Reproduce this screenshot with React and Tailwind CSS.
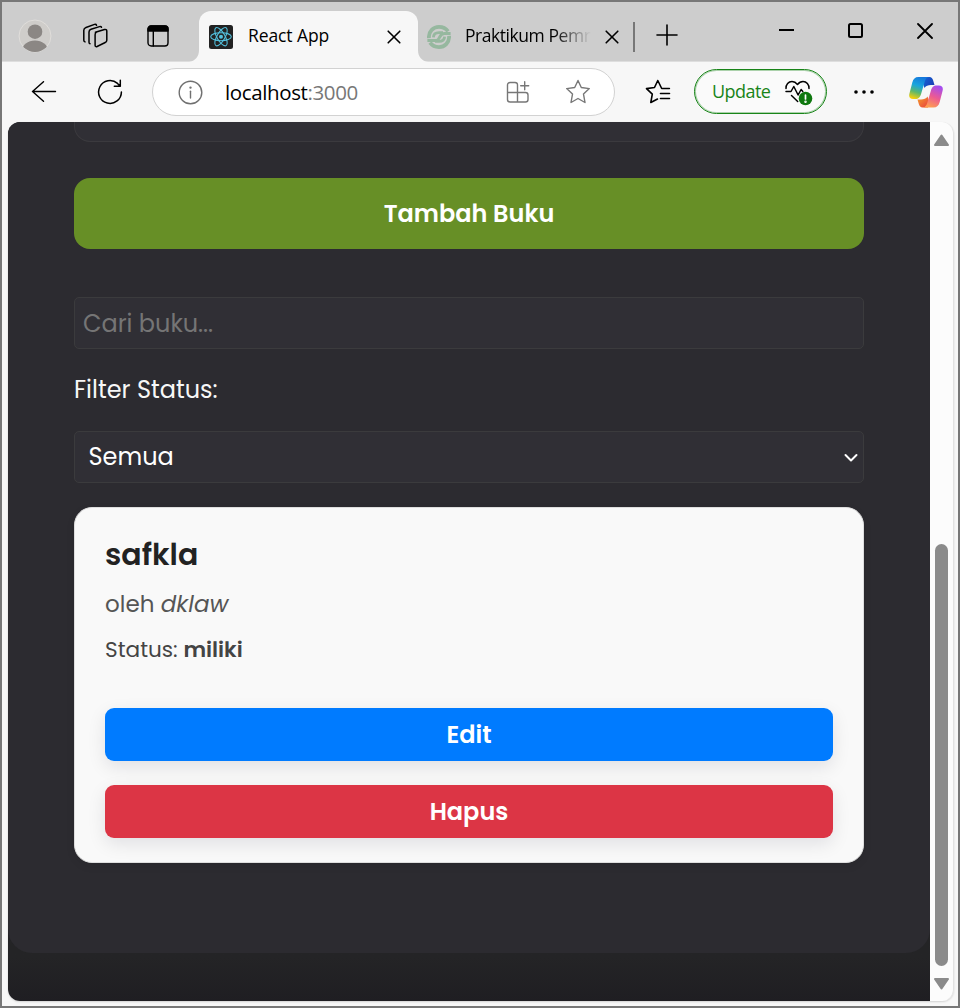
import React from 'react';

const UI = "font-['Segoe_UI','Open_Sans',sans-serif]";

function Stroke({ w, h, className, children, sw = 1.5 }) {
  return (
    <svg width={w} height={h} viewBox={`0 0 ${w} ${h}`} className={className} fill="none" stroke="currentColor" strokeWidth={sw} strokeLinecap="round" strokeLinejoin="round">
      {children}
    </svg>
  );
}

function ReactLogo() {
  return (
    <svg width="24" height="24" viewBox="0 0 24 24" className="shrink-0">
      <rect width="24" height="24" rx="2.5" fill="#222" />
      <g fill="none" stroke="#53c1de" strokeWidth="1.1">
        <ellipse cx="12" cy="11.7" rx="10.3" ry="4" />
        <ellipse cx="12" cy="11.7" rx="10.3" ry="4" transform="rotate(60 12 11.7)" />
        <ellipse cx="12" cy="11.7" rx="10.3" ry="4" transform="rotate(120 12 11.7)" />
      </g>
      <circle cx="12" cy="11.7" r="2" fill="#53c1de" />
    </svg>
  );
}

function CampusLogo() {
  return (
    <svg width="24" height="24" viewBox="0 0 24 24" className="shrink-0" fill="none" stroke="#96b89f" strokeWidth="3.8">
      <path d="M1.900 13.200C1.500 6 6.500 1.900 12 1.900c4 0 7 1.600 9 4.400" />
      <path d="M.4 15.400h9c3.500 0 2.500-6.800 8-6.800h6.200" strokeWidth="3" />
      <path d="M6.400 12.400C6.500 8.800 8.700 7.600 12 7.600h4" strokeWidth="2.800" />
      <path d="M22.100 10.800C22.500 18 17.500 22.100 12 22.100c-4 0-7-1.600-9-4.400" />
      <path d="M17.600 11.600c-.1 3.600-2.300 4.800-5.600 4.800H8" strokeWidth="2.800" />
    </svg>
  );
}

function Copilot() {
  return (
    <svg width="34" height="31" viewBox="0 0 34 31">
      <defs>
        <linearGradient id="cpA" x1="0.6" y1="0" x2="0.3" y2="1">
          <stop offset="0" stopColor="#1577dc" />
          <stop offset="0.4" stopColor="#19a5dd" />
          <stop offset="0.7" stopColor="#5cb86c" />
          <stop offset="1" stopColor="#f5cf0c" />
        </linearGradient>
        <linearGradient id="cpB" x1="0.7" y1="0" x2="0.3" y2="1">
          <stop offset="0" stopColor="#a44cf0" />
          <stop offset="0.5" stopColor="#ec5a93" />
          <stop offset="1" stopColor="#ffa24d" />
        </linearGradient>
        <linearGradient id="cpC" x1="0" y1="0" x2="1" y2="0.6">
          <stop offset="0" stopColor="#1467d8" />
          <stop offset="1" stopColor="#1b3fb5" />
        </linearGradient>
        <linearGradient id="cpD" x1="0" y1="0" x2="1" y2="1">
          <stop offset="0" stopColor="#f4a12b" />
          <stop offset="1" stopColor="#e9393f" />
        </linearGradient>
      </defs>
      <path d="M15 0h5.500c2 0 3 1.300 3.600 3.200L25.500 8H22c-3 0-5 .8-6.500 3L13.500 5Z" fill="url(#cpC)" />
      <path d="M19 30.500h-5.500c-2 0-3-1.300-3.600-3.200L8.500 22.500H12c3 0 5-.8 6.500-3L20.500 25.500Z" fill="url(#cpD)" />
      <path d="M9.500 0H20c-2.500.4-3.600 2.300-4.300 4.700L12.200 16.500C11 20.500 9.500 22 6.500 22H4.200C.8 22-.4 20 .4 16.700L3.300 5.500C4.300 1.900 6 0 9.500 0Z" fill="url(#cpA)" />
      <path d="M24.500 30.500H14c2.500-.4 3.600-2.300 4.300-4.700L21.800 14C23 10 24.500 8.500 27.500 8.500h2.300c3.400 0 4.600 2 3.800 5.300L30.700 25c-1 3.600-2.700 5.500-6.200 5.500Z" fill="url(#cpB)" />
    </svg>
  );
}

function TabStrip() {
  return (
    <div className="flex h-[60px] shrink-0 border-b border-[#dedede] bg-[#cdcdcd] text-black">
      <svg width="34" height="34" viewBox="0 0 34 34" className="mt-[17px] ml-4 shrink-0">
        <defs><clipPath id="av"><circle cx="17" cy="17" r="16" /></clipPath></defs>
        <circle cx="17" cy="17" r="16" fill="#cfcdca" stroke="#e0dedb" />
        <g clipPath="url(#av)" fill="#8b8784">
          <circle cx="17" cy="12.700" r="7.300" />
          <ellipse cx="17" cy="32" rx="13" ry="10.500" />
        </g>
      </svg>
      <Stroke w={26} h={26} className="mt-[21px] ml-[30px] shrink-0">
        <path d="M13.400 9.200 22.500 6.500c1.300-.4 2.300.3 2.300 1.600v9.100c0 1.100-.5 1.900-1.600 2.300l-8.100 4c-1.200.5-2-.1-2-1.300V11.800c0-1.300.2-2.200 1.300-2.600Z" />
        <path d="M19.500 4.300c-.3-.8-1-1-2-.7L9 6.300C7.700 6.700 7 7.600 7 8.900v10.300c0 .9.300 1.400 1 1.500" />
        <path d="M14.500 2.200c-.3-.9-1-1.100-2-.8L4 4.500C2.500 5.100 1.800 6 1.800 7.300v10c0 .9.500 1.400 1.200 1.600" />
      </Stroke>
      <Stroke w={22} h={22} className="mt-[23px] ml-[39px] shrink-0" sw={1.4}>
        <rect x="1" y="1" width="20" height="20" rx="3.200" />
        <path d="M1 6V4a3 3 0 0 1 3-3h14a3 3 0 0 1 3 3v2Z" fill="currentColor" />
        <path d="M6.300 6v15" />
      </Stroke>
      <svg width="10" height="12" viewBox="0 0 10 12" className="mt-[48px] ml-[20px] shrink-0 fill-[#f7f7f7]"><path d="M10 0v12H0C6 11 10 7 10 0Z" /></svg>
      <div className="mt-[9px] flex h-[51px] w-[219px] shrink-0 items-center rounded-t-[12px] bg-[#f7f7f7] pl-[10px]">
        <ReactLogo />
        <span className="ml-[15px] w-[139px] pb-[2px] text-[17.5px] tracking-[-0.1px]">React App</span>
        <Stroke w={14} h={14} sw={1.6}><path d="m1.200 1.200 11.600 11.600M12.800 1.200 1.200 12.800" /></Stroke>
      </div>
      <svg width="10" height="12" viewBox="0 0 10 12" className="mt-[48px] shrink-0 fill-[#f7f7f7]"><path d="M0 0v12h10C4 11 0 7 0 0Z" /></svg>
      <div className="-ml-px flex h-[51px] w-[194px] mt-[9px] shrink-0 items-center">
        <CampusLogo />
        <span className="ml-[14px] w-[126px] bg-gradient-to-r from-black from-70% to-transparent bg-clip-text pb-[2px] text-[17.500px] tracking-[-0.45px] whitespace-nowrap text-transparent">Praktikum Pemr</span>
        <Stroke w={14} h={14} className="ml-[14px] shrink-0" sw={1.6}><path d="m1.200 1.200 11.600 11.600M12.800 1.200 1.200 12.800" /></Stroke>
      </div>
      <div className="mt-[20px] ml-[12px] h-[30px] w-[1.5px] shrink-0 bg-[#777]" />
      <Stroke w={22} h={22} className="mt-[22px] ml-[21px] shrink-0" sw={1.6}><path d="M11 1v20M1 11h20" /></Stroke>
      <div className="mr-[25px] ml-auto flex shrink-0 pt-[21px]">
        <div className="mt-[6px] mr-[54px] h-[2px] w-[15px] bg-black" />
        <div className="mr-[54px] h-[15px] w-[15px] rounded-[2.5px] border-2 border-black" />
        <Stroke w={16} h={16} sw={1.8}><path d="m1 1 14 14M15 1 1 15" /></Stroke>
      </div>
    </div>
  );
}

function Toolbar() {
  return (
    <div className="flex h-[60px] shrink-0 items-center bg-[#f7f7f7] text-black">
      <Stroke w={26} h={22} className="ml-[29px] shrink-0" sw={1.4}><path d="M24.500 10.500H1.500M12.500 .7 1.500 10.500l11 9.800" /></Stroke>
      <Stroke w={26} h={26} className="ml-[40px] shrink-0" sw={1.5}><path d="M24.400 13A11.400 11.400 0 1 1 20.500 4.400L23.300 7.300M23.300 1.300v6h-6" /></Stroke>
      <div className="ml-[29px] flex h-[48px] w-[463px] shrink-0 items-center rounded-full border-[1.5px] border-[#d2d2d2] bg-white pl-[25px]">
        <Stroke w={25} h={25} className="shrink-0 text-[#707070]" sw={1.4}>
          <circle cx="12.500" cy="12.500" r="11.300" />
          <path d="M12.500 11.300v6.700" />
          <circle cx="12.500" cy="7.600" r=".5" fill="currentColor" />
        </Stroke>
        <span className="ml-[22px] w-[281px] text-[20.5px] tracking-[-0.38px]">localhost<span className="text-[#777]">:3000</span></span>
        <Stroke w={24} h={24} className="shrink-0 text-[#777]" sw={1.4}>
          <path d="M11.500 22V5c0-1.600-.8-2.500-2.500-2.500H4C2.500 2.500 1.500 3.500 1.500 5v14.500C1.500 21 2.500 22 4 22h15.500c1.500 0 2.500-1 2.500-2.500V15c0-1.600-1-2.500-2.500-2.500h-18M18.700 1.800v8M14.700 5.800h8" />
        </Stroke>
        <Stroke w={26} h={26} className="ml-[35px] shrink-0 text-[#777]" sw={1.4}>
          <path d="m13 1.500 3.300 7 8 1.100-5.800 5.500 1.500 8.400-7-4-7 4 1.500-8.400L1.700 9.600l8-1.100Z" />
        </Stroke>
      </div>
      <Stroke w={26} h={26} className="ml-[30px] shrink-0" sw={1.6}>
        <path d="M24.400 9.500h-7.700l-3.900-8-3.300 7-8 1.100 5.800 5.500-1.500 8.400 6.700-3.500M15.500 14.500h9M15.500 19.500h9" />
      </Stroke>
      <div className="mb-px ml-[23px] flex h-[45px] w-[133px] shrink-0 items-center rounded-full border border-[#188418] bg-[#fafafa] pl-[17px] inset-ring inset-ring-[#188418]/35">
        <span className="w-[73px] text-[18px] tracking-[-0.55px] text-[#188418]">Update</span>
        <svg width="28" height="26" viewBox="0 0 28 26" className="mt-[2px]" fill="none" stroke="#000" strokeWidth="1.500" strokeLinecap="round" strokeLinejoin="round">
          <path d="M1 8.500C.8 4.500 3.500 1.500 7 1.500c2.300 0 4 1.100 5.500 3 1.500-1.900 3.200-3 5.500-3 3.500 0 6.200 3 6 7M1 11.500h5l2.800-5 4.300 8.500 3-5.500 1.700 2M6.500 15.500l6.200 6" />
          <circle cx="20.500" cy="18.500" r="6.800" fill="#0f780f" stroke="none" />
          <path d="M20.500 15v4" stroke="#fff" strokeWidth="1.700" /><circle cx="20.500" cy="21.800" r=".5" stroke="#fff" />
        </svg>
      </div>
      <svg width="20" height="4" viewBox="0 0 20 4" className="ml-[27px] shrink-0"><circle cx="2" cy="2" r="1.800" /><circle cx="10" cy="2" r="1.800" /><circle cx="18" cy="2" r="1.800" /></svg>
      <div className="ml-[35px] shrink-0"><Copilot /></div>
    </div>
  );
}

function BookPage() {
  return (
    <div className="flex w-[922px] shrink-0 flex-col overflow-hidden rounded-l-[12px] bg-gradient-to-b from-[#242426] from-95% to-[#1f1e22] font-['Poppins','Inter',sans-serif]">
      <div className="flex h-[831px] shrink-0 flex-col rounded-b-[24px] bg-[#2c2b30] px-[66px]">
        <div className="h-[20px] shrink-0 rounded-b-[16px] border border-t-0 border-[#3b3a3e] bg-[#302f35]" />
        <button className="mt-[36px] h-[71px] shrink-0 rounded-[16px] bg-[#678f26] pt-px text-[24px] font-semibold text-white">Tambah Buku</button>
        <div className="mt-[48px] flex h-[52px] shrink-0 items-center rounded-[5px] border border-[#3b3b3d] bg-[#302f35] pt-[2px] pl-[8px] text-[24px] tracking-[-0.03px] text-[#757575]">Cari buku...</div>
        <div className="mt-[23px] flex h-[36px] shrink-0 items-center text-[24px] text-[#f7f7f7]">Filter Status:</div>
        <div className="mt-[23px] flex h-[52px] shrink-0 items-center justify-between rounded-[5px] border border-[#3b3b3d] bg-[#302f35] pr-[5px] pl-[13.5px] text-[24px] text-white">
          <span>Semua</span>
          <Stroke w={14} h={10} sw={2} className="mt-px"><path d="m1.500 2 5.500 5.500L12.500 2" /></Stroke>
        </div>
        <div className="mt-[24px] flex h-[356px] shrink-0 flex-col rounded-[18px] border border-[#dedede] bg-[#f9f9f9] px-[30px] shadow-[0_3px_8px_rgba(0,0,0,0.08)]">
          <h3 className="mt-[26px] h-[42px] text-[30px] leading-[42px] font-semibold text-[#222]">safkla</h3>
          <p className="mt-[11px] h-[34px] text-[23px] leading-[34px] tracking-[0.05px] text-[#555]">oleh <em>dklaw</em></p>
          <p className="mt-[12px] h-[34px] text-[21.6px] leading-[34px] text-[#444]">Status: <strong className="font-semibold">miliki</strong></p>
          <button className="mt-[41px] h-[53px] shrink-0 rounded-[9px] bg-[#007bff] pt-px text-[24px] font-semibold text-white shadow-[0_6px_18px_rgba(0,0,40,0.1)]">Edit</button>
          <button className="mt-[24px] h-[53px] shrink-0 rounded-[9px] bg-[#dc3545] pt-px text-[24px] font-semibold text-white shadow-[0_6px_18px_rgba(0,0,40,0.1)]">Hapus</button>
        </div>
      </div>
    </div>
  );
}

function Scrollbar() {
  return (
    <div className="flex w-[24px] shrink-0 flex-col items-center rounded-r-[12px] border-r border-[#e2e2e2] bg-[#fcfcfc]">
      <svg width="15" height="12" viewBox="0 0 15 12" className="mt-[12px] shrink-0" fill="#8b8b8b" stroke="#8b8b8b" strokeWidth="2" strokeLinejoin="round"><path d="M7.500 1.500 14 11H1Z" /></svg>
      <div className="mt-[398px] h-[422px] w-[13px] shrink-0 rounded-full bg-[#8b8b8b]" />
      <svg width="15" height="12" viewBox="0 0 15 12" className="mt-[12px] shrink-0" fill="#8b8b8b" stroke="#8b8b8b" strokeWidth="2" strokeLinejoin="round"><path d="M7.500 10.500 14 1H1Z" /></svg>
    </div>
  );
}

export default function App() {
  return (
    <div className={`flex h-[1008px] w-[960px] flex-col overflow-hidden border-2 border-[#777] bg-[#f7f7f7] ${UI}`}>
      <TabStrip />
      <Toolbar />
      <div className="ml-[6px] flex h-[879px] w-[946px] shrink-0 rounded-[12px] shadow-[0_1px_2px_rgba(0,0,0,0.15)]">
        <BookPage />
        <Scrollbar />
      </div>
    </div>
  );
}
